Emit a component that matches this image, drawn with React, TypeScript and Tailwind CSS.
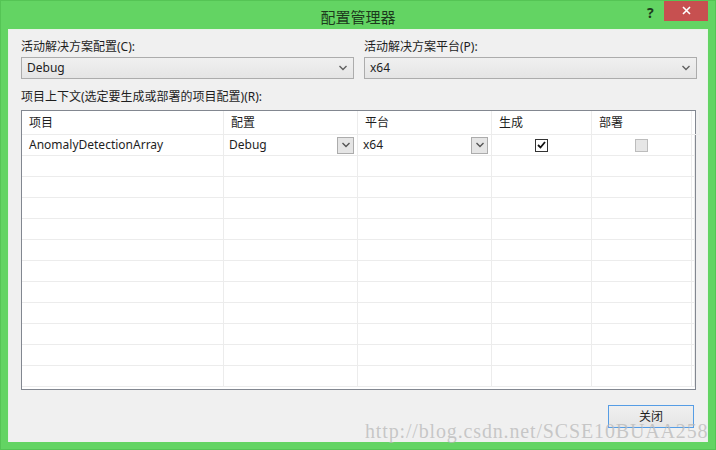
import React from "react";

const Chevron = ({ color = "#606060" }: { color?: string }) => (
  <svg width="8" height="6" viewBox="0 0 8 6">
    <path d="M0.5 1 L4 4.5 L7.5 1" fill="none" stroke={color} strokeWidth="1.4" />
  </svg>
);

const Select = ({ value, className }: { value: string; className: string }) => (
  <div
    className={`h-[22px] border border-[#acacac] bg-gradient-to-b from-[#f0f0f0] to-[#e5e5e5] flex items-center justify-between pl-[5px] pr-[6px] text-[12px] text-[#1e1e1e] ${className}`}
  >
    <span>{value}</span>
    <Chevron />
  </div>
);

const CellDrop = ({ value }: { value: string }) => (
  <div className="h-full flex items-center justify-between pl-[5px] pr-[3px]">
    <span>{value}</span>
    <div className="w-[17px] h-[17px] border border-[#acacac] bg-[#e5e5e5] flex items-center justify-center">
      <Chevron color="#555" />
    </div>
  </div>
);

export default function App() {
  const cols = "grid-cols-[202px_134px_134px_100px_100px_1fr]";
  const emptyRows = Array.from({ length: 11 });
  const cell = "border-r border-b border-[#ececec]";
  return (
    <div
      className="w-[716px] h-[450px] bg-[#63d463] border border-[#55c455] relative overflow-hidden"
      style={{ fontFamily: '"Noto Sans", "Noto Sans CJK SC", sans-serif' }}
    >
      {/* title bar */}
      <div className="h-[28px] relative flex items-center justify-center">
        <span className="text-[15px] text-[#1d3b1d] mt-[5px]" style={{ fontFamily: '"Noto Sans CJK SC", sans-serif' }}>
          配置管理器
        </span>
        <span className="absolute left-[646px] top-[1px] text-[14px] font-bold text-[#1d3b1d]">?</span>
        <div className="absolute left-[663px] top-[-1px] w-[44px] h-[21px] bg-[#c75050] flex items-center justify-center">
          <svg width="9" height="9" viewBox="0 0 9 9">
            <path d="M1 1 L8 8 M8 1 L1 8" stroke="#ffffff" strokeWidth="1.6" />
          </svg>
        </div>
      </div>

      {/* content */}
      <div className="ml-[7px] w-[700px] h-[413px] bg-[#f0f0f0] border-t border-l border-r border-[#e8f2e8] px-[12px] pt-[8px] text-[12px] text-[#1e1e1e] flex flex-col">
        <div className="flex gap-[10px]">
          <div className="flex flex-col">
            <div className="h-[19px] leading-[17px]">活动解决方案配置(C):</div>
            <Select value="Debug" className="w-[333px]" />
          </div>
          <div className="flex flex-col">
            <div className="h-[19px] leading-[17px]">活动解决方案平台(P):</div>
            <Select value="x64" className="w-[333px]" />
          </div>
        </div>
        <div className="h-[19px] leading-[17px] mt-[9px]">项目上下文(选定要生成或部署的项目配置)(R):</div>
        <div className="mt-[3px] w-[675px] h-[280px] border border-[#828790] bg-white">
          <div className={`grid ${cols} h-[24px]`}>
            {["项目", "配置", "平台", "生成", "部署", ""].map((h, i) => (
              <div key={i} className={`${cell} pl-[7px] flex items-center`}>
                {h}
              </div>
            ))}
          </div>
          <div className={`grid ${cols} h-[21px]`}>
            <div className={`${cell} pl-[7px] flex items-center`}>AnomalyDetectionArray</div>
            <div className={cell}>
              <CellDrop value="Debug" />
            </div>
            <div className={cell}>
              <CellDrop value="x64" />
            </div>
            <div className={`${cell} flex items-center justify-center`}>
              <div className="w-[13px] h-[13px] border border-[#333] bg-white flex items-center justify-center">
                <svg width="9" height="8" viewBox="0 0 9 8">
                  <path d="M1 4 L3.5 6.5 L8 1" fill="none" stroke="#111" strokeWidth="1.8" />
                </svg>
              </div>
            </div>
            <div className={`${cell} flex items-center justify-center`}>
              <div className="w-[13px] h-[13px] border border-[#bcbcbc] bg-[#e6e6e6]" />
            </div>
            <div className={cell} />
          </div>
          {emptyRows.map((_, r) => (
            <div key={r} className={`grid ${cols} h-[21px]`}>
              {Array.from({ length: 6 }).map((__, c) => (
                <div key={c} className={cell} />
              ))}
            </div>
          ))}
        </div>
        <div className="flex justify-end mt-[15px]">
          <button className="w-[86px] h-[23px] border border-[#569de5] bg-gradient-to-b from-[#f0f0f0] to-[#e5e5e5] text-[12px] text-[#1e1e1e] mr-[1px]">
            关闭
          </button>
        </div>
      </div>

      {/* watermark */}
      <div
        className="absolute left-[364px] top-[423px] text-[20px] leading-[14px] text-[rgba(185,185,185,0.75)] whitespace-nowrap tracking-[0.85px]"
        style={{ fontFamily: '"Liberation Serif", serif' }}
      >
        http://blog.csdn.net/SCSE10BUAA258
      </div>
    </div>
  );
}
